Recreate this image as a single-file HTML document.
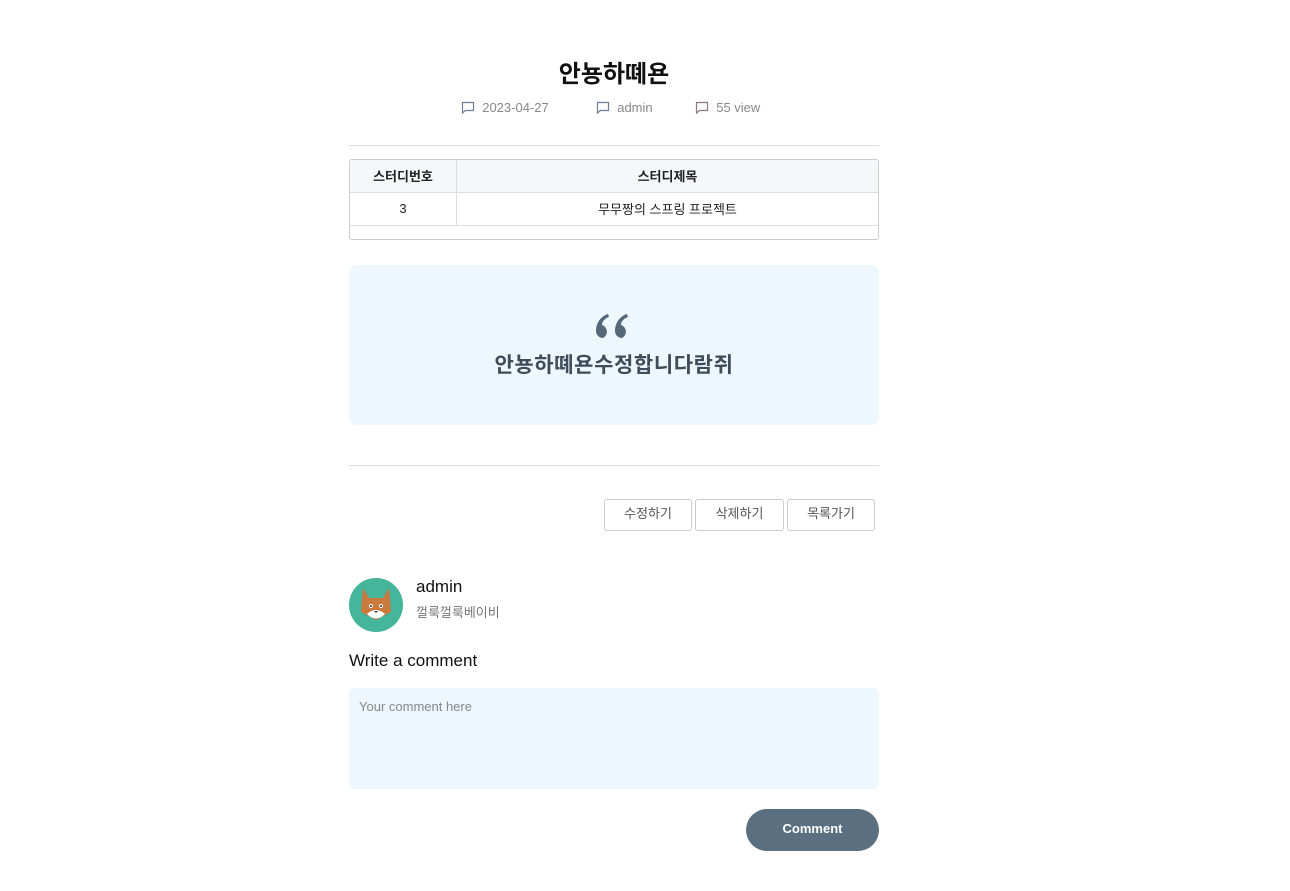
<!DOCTYPE html>
<html><head><meta charset="utf-8"><style>
body{margin:0;background:#fff;font-family:"Liberation Sans","Noto Sans CJK KR",sans-serif;}
.w{position:absolute;left:349px;width:530px;}
.ab{position:absolute;}
</style></head><body>
<div class="ab" style="left:0;width:1228px;top:58px;text-align:center;font-size:24px;font-weight:bold;color:#111;line-height:34px;">안뇽하뗴욘</div>
<div class="ab" style="left:461px;top:100px;font-size:13px;color:#888;line-height:16px;">
<span class="ab" style="left:0;white-space:nowrap"><svg width="14" height="13" style="vertical-align:-2px"><path d="M1.5 1.5h11v8h-8l-3 2.5z" fill="none" stroke="#6b7e95" stroke-width="1.2"/></svg>&nbsp; 2023-04-27</span>
<span class="ab" style="left:135px;white-space:nowrap"><svg width="14" height="13" style="vertical-align:-2px"><path d="M1.5 1.5h11v8h-8l-3 2.5z" fill="none" stroke="#6b7e95" stroke-width="1.2"/></svg>&nbsp; admin</span>
<span class="ab" style="left:234px;white-space:nowrap"><svg width="14" height="13" style="vertical-align:-2px"><path d="M1.5 1.5h11v8h-8l-3 2.5z" fill="none" stroke="#8a7b78" stroke-width="1.2"/></svg>&nbsp; 55 view</span>
</div>
<div class="w" style="top:145px;border-top:1px solid #ddd;"></div>
<div class="w" style="top:159px;height:79px;border:1px solid #ccc;border-radius:3px;width:528px;">
<table style="border-collapse:collapse;width:100%;font-size:13px;color:#222;">
<tr style="background:#f6f7f9;height:32px;font-weight:bold;"><td style="width:104px;text-align:center;border:1px solid #ddd;border-top:none;border-left:none">스터디번호</td><td style="text-align:center;border-bottom:1px solid #ddd;">스터디제목</td></tr>
<tr style="height:33px;"><td style="text-align:center;border-right:1px solid #ddd;border-bottom:1px solid #ddd">3</td><td style="text-align:center;border-bottom:1px solid #ddd">무무짱의 스프링 프로젝트</td></tr>
</table></div>
<div class="w" style="top:265px;height:160px;background:#eef6fe;border-radius:8px;text-align:center;">
<svg class="ab" style="left:247px;top:49px" width="36" height="24" viewBox="0 0 36 24"><g fill="#56697a"><path d="M7 24a7 7 0 0 1-7-7C0 9 5 2 12 0l1 3C8 5 6 8 6 11a7 7 0 0 1 1 13z"/><path d="M26 24a7 7 0 0 1-7-7c0-8 5-15 12-17l1 3c-5 2-7 5-7 8a7 7 0 0 1 1 13z"/></g></svg>
<div class="ab" style="left:0;width:530px;top:87px;font-size:21px;font-weight:bold;color:#3f4d5a;line-height:28px;letter-spacing:0.6px;">안뇽하뗴욘수정합니다람쥐</div>
</div>
<div class="w" style="top:465px;border-top:1px solid #ddd;"></div>
<div class="ab" style="left:604px;top:499px;font-size:13px;color:#555;">
<span class="ab" style="left:0;width:86px;height:30px;border:1px solid #ccc;border-radius:3px;text-align:center;line-height:28px;">수정하기</span>
<span class="ab" style="left:91px;width:87px;height:30px;border:1px solid #ccc;border-radius:3px;text-align:center;line-height:28px;">삭제하기</span>
<span class="ab" style="left:183px;width:86px;height:30px;border:1px solid #ccc;border-radius:3px;text-align:center;line-height:28px;">목록가기</span>
</div>
<svg class="ab" style="left:349px;top:578px" width="54" height="54" viewBox="0 0 54 54"><circle cx="27" cy="27" r="27" fill="#45b59c"/><path d="M14 10l6 10h14l6-10 2 24-15 8-15-8z" fill="#c97a3c"/><path d="M18 36q9-8 18 0-9 9-18 0z" fill="#fff"/><circle cx="22" cy="28" r="2" fill="#fff"/><circle cx="32" cy="28" r="2" fill="#fff"/><circle cx="22" cy="28" r="1" fill="#333"/><circle cx="32" cy="28" r="1" fill="#333"/><path d="M25 33h4l-2 2z" fill="#333"/></svg>
<div class="ab" style="left:416px;top:577px;font-size:17px;color:#111;">admin</div>
<div class="ab" style="left:416px;top:602px;font-size:13px;color:#777;">껄룩껄룩베이비</div>
<div class="ab" style="left:349px;top:651px;font-size:17px;color:#111;">Write a comment</div>
<div class="w" style="top:688px;height:101px;background:#eef6fe;border-radius:5px;"><div style="padding:11px 10px;font-size:13px;color:#888;">Your comment here</div></div>
<div class="ab" style="left:746px;top:809px;width:133px;height:42px;border-radius:21px;background:#5a6f7f;color:#fff;font-size:13px;font-weight:bold;text-align:center;line-height:40px;">Comment</div>
</body></html>
